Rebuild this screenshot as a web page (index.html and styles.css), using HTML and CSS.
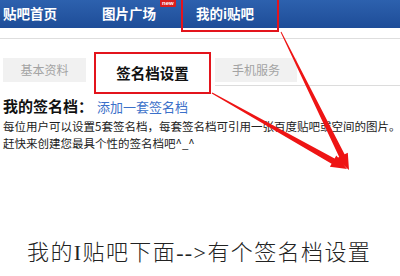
FILE: index.html
```html
<!DOCTYPE html>
<html lang="zh">
<head>
<meta charset="utf-8">
<link rel="stylesheet" href="styles.css">
</head>
<body>
<div class="page">
  <nav class="nav">
    <a class="nav-item n1">贴吧首页</a>
    <a class="nav-item n2">图片广场<span class="badge">new</span></a>
    <a class="nav-item n3">我的i贴吧</a>
  </nav>
  <div class="rule"></div>
  <div class="tabs">
    <div class="tab tab-gray t1">基本资料</div>
    <div class="tab tab-active">签名档设置</div>
    <div class="rest"><div class="tab tab-gray t3">手机服务</div></div>
  </div>
  <section class="sig">
    <div class="sig-head"><strong class="sig-title">我的签名档：</strong><a class="sig-link">添加一套签名档</a></div>
    <p class="sig-text first">每位用户可以设置5套签名档，每套签名档可引用一张百度贴吧或空间的图片。</p>
    <p class="sig-text">赶快来创建您最具个性的签名档吧^_^</p>
  </section>
  <p class="caption">我的I贴吧下面--&gt;有个签名档设置</p>
  <svg class="arrows" width="400" height="276" viewBox="0 0 400 276">
    <polygon fill="#ee1414" points="281.4,31.8 344.6,154.3 347.8,152.7 349,170 336.0,158.5 339.2,156.9 280.6,32.2"/>
    <polygon fill="#ee1414" points="212.3,92.5 334.6,158.4 336.3,155.4 347,169 329.9,166.8 331.6,163.8 211.7,93.5"/>
  </svg>
</div>
</body>
</html>
```

FILE: styles.css
```css
html, body {
  margin: 0;
  padding: 0;
  background: #fff;
}
.page {
  position: relative;
  width: 400px;
  height: 276px;
  overflow: hidden;
  font-family: "Noto Sans CJK SC", "Liberation Sans", sans-serif;
  color: #222;
}
.nav {
  display: flex;
  align-items: flex-start;
  height: 28px;
  background: linear-gradient(#2d61ae, #1e4d98);
  padding-left: 3px;
}
.nav-item {
  display: block;
  color: #fff;
  font-weight: bold;
  font-size: 13.5px;
  line-height: 27px;
  white-space: nowrap;
}
.n2 {
  position: relative;
  margin-left: 45px;
}
.badge {
  position: absolute;
  left: 58px;
  top: 0;
  background: #d81e1e;
  color: #fff;
  font-size: 6px;
  line-height: 7px;
  padding: 0 2px;
  border-radius: 0 0 1px 1px;
  font-weight: bold;
  font-family: "Liberation Sans", sans-serif;
}
.n3 {
  box-sizing: border-box;
  margin-left: 25px;
  margin-top: -2px;
  height: 34px;
  width: 98px;
  padding-left: 13px;
  border: 2px solid #e3141c;
}
.rule {
  margin-top: 10px;
  height: 1px;
  background: #dedede;
}
.tabs {
  display: flex;
  align-items: flex-start;
  margin-top: 13px;
  padding-left: 3px;
}
.tab {
  box-sizing: border-box;
  text-align: center;
}
.tab-gray {
  margin-top: 6px;
  height: 24px;
  background: #f1f1f1;
  color: #a3a3a3;
  font-size: 12px;
  line-height: 24px;
}
.t1 {
  width: 83px;
}
.tab-active {
  margin-left: 8px;
  width: 117px;
  height: 42px;
  border: 2px solid #e3141c;
  font-weight: bold;
  font-size: 14.5px;
  line-height: 38px;
  color: #111;
}
.rest {
  flex: 1;
  margin-left: 4px;
  height: 33px;
  border-bottom: 1px solid #dcdcdc;
}
.t3 {
  width: 82px;
}
.sig {
  padding-left: 3px;
}
.sig-head {
  margin-top: 3px;
  line-height: 17px;
  white-space: nowrap;
}
.sig-title {
  font-size: 15px;
  color: #111;
}
.sig-link {
  margin-left: 4px;
  font-size: 13px;
  color: #3b70c9;
}
.sig-text {
  margin: 0;
  font-size: 11.5px;
  line-height: 17px;
  white-space: nowrap;
  color: #222;
}
.sig-text.first {
  margin-top: 3px;
}
.caption {
  margin: 86px 0 0 27px;
  font-family: "Liberation Serif", "Noto Sans CJK SC", serif;
  font-size: 22px;
  line-height: 30px;
  font-weight: 300;
  letter-spacing: 1.4px;
  color: #222;
  white-space: nowrap;
}
.arrows {
  position: absolute;
  left: 0;
  top: 0;
  pointer-events: none;
}
```
